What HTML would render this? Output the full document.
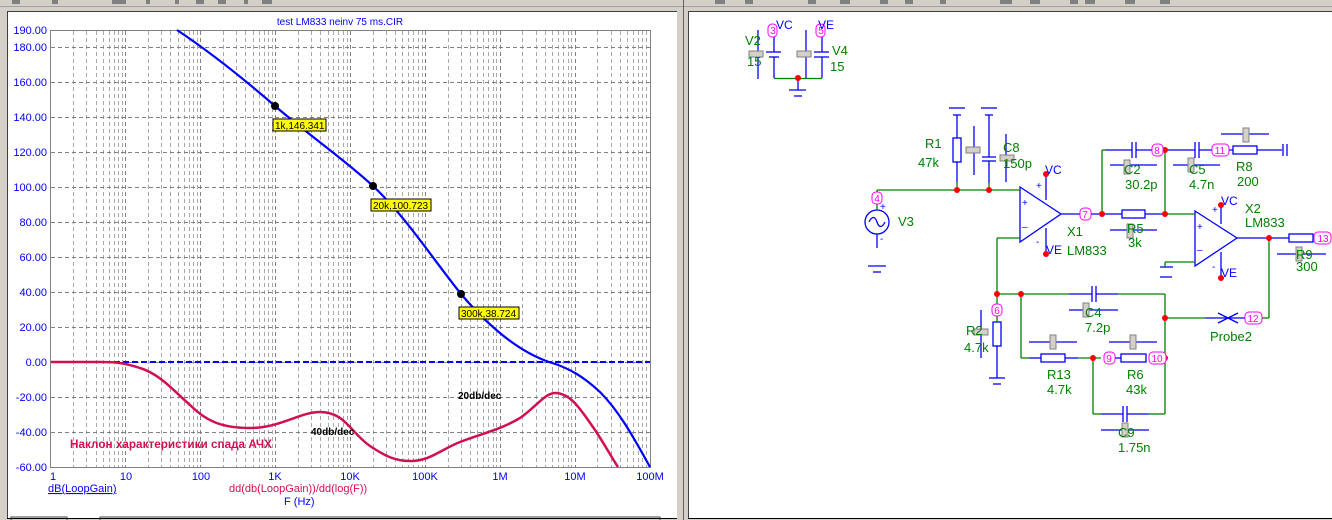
<!DOCTYPE html>
<html><head><meta charset="utf-8"><style>
html,body{margin:0;padding:0;width:1332px;height:520px;overflow:hidden;background:#d4d0c8;}
svg{display:block;font-family:"Liberation Sans",sans-serif;}
</style></head><body>
<svg id="s" width="1332" height="520" viewBox="0 0 1332 520" xmlns="http://www.w3.org/2000/svg">
<rect x="0" y="0" width="1332" height="520" fill="#d4d0c8"/>
<line x1="0" y1="6.5" x2="1332" y2="6.5" stroke="#a0a0a0"/>
<g fill="#808080">
<rect x="12" y="0" width="8" height="4"/><rect x="52" y="0" width="6" height="4"/><rect x="112" y="0" width="14" height="4"/><rect x="146" y="0" width="4" height="4"/><rect x="175" y="0" width="4" height="4"/><rect x="196" y="0" width="8" height="4"/><rect x="218" y="0" width="8" height="4"/><rect x="244" y="0" width="4" height="4"/><rect x="262" y="0" width="10" height="4"/>
<rect x="715" y="0" width="10" height="4"/><rect x="745" y="0" width="8" height="4"/><rect x="808" y="0" width="8" height="4"/><rect x="840" y="0" width="10" height="4"/><rect x="880" y="0" width="8" height="4"/><rect x="905" y="0" width="8" height="4"/><rect x="940" y="0" width="6" height="4"/><rect x="1000" y="0" width="12" height="4"/><rect x="1030" y="0" width="10" height="4"/><rect x="1070" y="0" width="8" height="4"/><rect x="1085" y="0" width="10" height="4"/><rect x="1125" y="0" width="10" height="4"/><rect x="1160" y="0" width="10" height="4"/>
</g>
<!-- left window -->
<rect x="7" y="11" width="670" height="508" fill="#fff"/>
<line x1="7.5" y1="11" x2="7.5" y2="519" stroke="#404040"/>
<line x1="7" y1="11.5" x2="677" y2="11.5" stroke="#404040"/>
<line x1="7" y1="518.5" x2="677" y2="518.5" stroke="#000"/>
<line x1="683.5" y1="0" x2="683.5" y2="520" stroke="#606060"/>
<!-- right window -->
<rect x="688" y="11" width="644" height="508" fill="#fff"/>
<line x1="688.5" y1="11" x2="688.5" y2="519" stroke="#404040"/>
<line x1="688" y1="11.5" x2="1332" y2="11.5" stroke="#404040"/>
<line x1="688" y1="518.5" x2="1332" y2="518.5" stroke="#000"/>

<g id="grid"></g>
<line x1="50.5" y1="30" x2="50.5" y2="467" stroke="#808080"/>
<line x1="50" y1="467.5" x2="651" y2="467.5" stroke="#808080"/>
<line x1="650.5" y1="30" x2="650.5" y2="467" stroke="#808080"/>
<line x1="50" y1="30.5" x2="651" y2="30.5" stroke="#808080"/>

<text x="340" y="25" font-size="10" fill="#0000ff" text-anchor="middle">test LM833 neinv 75 ms.CIR</text>
<g font-size="11" fill="#0000ff" text-anchor="end">
<text x="47" y="34">190.00</text><text x="47" y="51">180.00</text><text x="47" y="86">160.00</text><text x="47" y="121">140.00</text><text x="47" y="156">120.00</text><text x="47" y="191">100.00</text><text x="47" y="226">80.00</text><text x="47" y="261">60.00</text><text x="47" y="296">40.00</text><text x="47" y="331">20.00</text><text x="47" y="366">0.00</text><text x="47" y="401">-20.00</text><text x="47" y="436">-40.00</text><text x="47" y="471">-60.00</text>
</g>
<g font-size="11" fill="#0000ff" text-anchor="middle">
<text x="53" y="480">1</text><text x="126" y="480">10</text><text x="201" y="480">100</text><text x="275" y="480">1K</text><text x="350" y="480">10K</text><text x="425" y="480">100K</text><text x="500" y="480">1M</text><text x="575" y="480">10M</text><text x="650" y="480">100M</text>
</g>
<text x="48" y="492" font-size="11" fill="#0000ff" text-decoration="underline">dB(LoopGain)</text>
<text x="229" y="492" font-size="11" fill="#d01050">dd(db(LoopGain))/dd(log(F))</text>
<text x="284" y="505" font-size="11" fill="#0000ff">F (Hz)</text>

<line x1="51" y1="362" x2="650" y2="362" stroke="#0000ff" stroke-width="2" stroke-dasharray="6,3"/>
<path d="M51,362 L100,362 C112,362 122,362 140,368 C160,374 175,392 190,405 C205,420 220,428 250,428 C280,428 300,412 320,412 C345,412 350,432 370,446 C385,456 395,461 410,461 C430,461 440,450 460,442 C480,434 500,430 520,418 C535,408 545,393 555,393 C570,393 580,408 595,430 C605,445 612,458 618,467" fill="none" stroke="#d01050" stroke-width="2.5"/>
<path d="M177,30 C210,52 245,80 275,106 C310,136 345,160 373,186 C405,216 430,255 461,294 C490,328 520,352 549,362 C570,368 585,378 600,392 C620,412 635,440 650,467" fill="none" stroke="#0000ff" stroke-width="2.2"/>
<circle cx="275" cy="106" r="4" fill="#000"/><circle cx="373" cy="186" r="4" fill="#000"/><circle cx="461" cy="294" r="4" fill="#000"/>
<g font-size="10" fill="#000">
<rect x="273" y="119" width="53" height="12" fill="#ffff00" stroke="#000"/><text x="275" y="129">1k,146.341</text>
<rect x="371" y="199" width="60" height="12" fill="#ffff00" stroke="#000"/><text x="373" y="209">20k,100.723</text>
<rect x="459" y="307" width="60" height="12" fill="#ffff00" stroke="#000"/><text x="461" y="317">300k,38.724</text>
<text x="458" y="399" font-weight="bold">20db/dec</text>
<text x="311" y="435" font-weight="bold">40db/dec</text>
</g>
<text x="70" y="448" font-size="12" font-weight="bold" fill="#d01050" textLength="202" lengthAdjust="spacingAndGlyphs">Наклон характеристики спада АЧХ</text>
<!-- status bar boxes -->
<g fill="none" stroke="#404040"><rect x="11" y="517" width="56" height="4"/><rect x="100" y="517" width="560" height="4"/></g>

<!-- schematic -->
<g fill="none" stroke-width="1.3">
<!-- top supply -->
<g stroke="#0000ff">
<line x1="758" y1="30" x2="758" y2="79"/><line x1="774" y1="37" x2="774" y2="52"/><line x1="766" y1="52" x2="781" y2="52"/><line x1="769" y1="57" x2="779" y2="57"/><line x1="774" y1="57" x2="774" y2="78"/>
<line x1="806" y1="30" x2="806" y2="78"/><line x1="822" y1="37" x2="822" y2="52"/><line x1="814" y1="52" x2="829" y2="52"/><line x1="814" y1="57" x2="829" y2="57"/><line x1="822" y1="57" x2="822" y2="78"/>
<line x1="798" y1="78" x2="798" y2="90"/><line x1="789" y1="90" x2="806" y2="90"/><line x1="794" y1="96" x2="802" y2="96"/>
</g>
<line x1="774" y1="78.5" x2="822" y2="78.5" stroke="#008000"/>
<!-- R1, C8 -->
<g stroke="#0000ff">
<line x1="949" y1="108" x2="965" y2="108"/><line x1="953" y1="115" x2="961" y2="115"/><line x1="957" y1="115" x2="957" y2="138"/><rect x="953" y="138" width="8" height="24"/><line x1="957" y1="162" x2="957" y2="182"/>
<line x1="981" y1="108" x2="997" y2="108"/><line x1="985" y1="115" x2="993" y2="115"/><line x1="989" y1="115" x2="989" y2="157"/><line x1="982" y1="157" x2="996" y2="157"/><line x1="982" y1="161" x2="996" y2="161"/><line x1="989" y1="161" x2="989" y2="183"/>
<line x1="974" y1="126" x2="974" y2="175"/><line x1="1006" y1="134" x2="1006" y2="182"/>
<!-- V3 -->
<circle cx="877" cy="222" r="12"/><path d="M869,222 C872,216 875,216 877,222 C879,228 882,228 885,222"/>
<line x1="877" y1="234" x2="877" y2="248"/><line x1="868" y1="266" x2="886" y2="266"/><line x1="873" y1="272" x2="881" y2="272"/>
<!-- X1 -->
<path d="M1020,187 L1061,214 L1020,242 Z"/><line x1="1046" y1="174" x2="1046" y2="200"/><line x1="1046" y1="228" x2="1046" y2="254"/>
<line x1="1061" y1="214" x2="1102" y2="214"/>
<line x1="1102" y1="214" x2="1122" y2="214"/><rect x="1122" y="210" width="23" height="8"/><line x1="1145" y1="214" x2="1165" y2="214"/>
<line x1="1110" y1="230" x2="1157" y2="230"/>
<line x1="1105" y1="150" x2="1132" y2="150"/><line x1="1132" y1="142" x2="1132" y2="158"/><line x1="1136" y1="142" x2="1136" y2="158"/><line x1="1136" y1="150" x2="1165" y2="150"/>
<line x1="1110" y1="165" x2="1157" y2="165"/>
<line x1="1165" y1="150" x2="1195" y2="150"/><line x1="1195" y1="142" x2="1195" y2="158"/><line x1="1199" y1="142" x2="1199" y2="158"/><line x1="1199" y1="150" x2="1233" y2="150"/>
<line x1="1173" y1="165" x2="1220" y2="165"/>
<rect x="1233" y="146" width="24" height="8"/><line x1="1257" y1="150" x2="1282" y2="150"/><line x1="1283" y1="144" x2="1283" y2="156"/><line x1="1287" y1="144" x2="1287" y2="156"/>
<line x1="1221" y1="134" x2="1269" y2="134"/>
<!-- X2 -->
<path d="M1195,211 L1237,238 L1195,266 Z"/><line x1="1221" y1="205" x2="1221" y2="224"/><line x1="1221" y1="252" x2="1221" y2="278"/>
<line x1="1237" y1="238" x2="1289" y2="238"/><rect x="1289" y="234" width="24" height="8"/>
<line x1="1277" y1="254" x2="1326" y2="254"/>
<line x1="1160" y1="267" x2="1173" y2="267"/><line x1="1160" y1="277" x2="1172" y2="277"/>
<!-- lower network -->
<line x1="1069" y1="294" x2="1092" y2="294"/><line x1="1092" y1="286" x2="1092" y2="302"/><line x1="1096" y1="286" x2="1096" y2="302"/><line x1="1096" y1="294" x2="1118" y2="294"/>
<line x1="1069" y1="310" x2="1118" y2="310"/>
<line x1="1205" y1="318" x2="1253" y2="318"/><path d="M1218,313 L1238,323 M1218,323 L1238,313"/>
<rect x="997" y="322" width="0" height="0"/><rect x="993" y="322" width="8" height="24"/><line x1="997" y1="346" x2="997" y2="378"/>
<line x1="989" y1="378" x2="1005" y2="378"/><line x1="993" y1="384" x2="1001" y2="384"/><line x1="981" y1="310" x2="981" y2="358"/>
<line x1="1029" y1="358" x2="1041" y2="358"/><rect x="1041" y="354" width="24" height="8"/><line x1="1065" y1="358" x2="1078" y2="358"/>
<line x1="1029" y1="342" x2="1077" y2="342"/><line x1="1109" y1="342" x2="1157" y2="342"/>
<line x1="1109" y1="358" x2="1121" y2="358"/><rect x="1121" y="354" width="25" height="8"/>
<line x1="1101" y1="414" x2="1123" y2="414"/><line x1="1123" y1="406" x2="1123" y2="422"/><line x1="1127" y1="406" x2="1127" y2="422"/><line x1="1127" y1="414" x2="1149" y2="414"/>
<line x1="1101" y1="430" x2="1149" y2="430"/>
</g>
<g stroke="#008000">
<line x1="877" y1="190" x2="1020" y2="190"/><line x1="877" y1="190" x2="877" y2="210"/>
<line x1="957" y1="182" x2="957" y2="190"/><line x1="989" y1="183" x2="989" y2="190"/>
<line x1="1020" y1="238" x2="997" y2="238"/><line x1="997" y1="238" x2="997" y2="322"/>
<line x1="1102" y1="214" x2="1102" y2="150"/><line x1="1102" y1="150" x2="1106" y2="150"/>
<line x1="1165" y1="150" x2="1165" y2="214"/><line x1="1165" y1="214" x2="1195" y2="214"/>
<line x1="1195" y1="262" x2="1165" y2="262"/><line x1="1165" y1="262" x2="1165" y2="267"/>
<line x1="1269" y1="238" x2="1269" y2="318"/><line x1="1262" y1="318" x2="1269" y2="318"/>
<line x1="997" y1="294" x2="1069" y2="294"/><line x1="1118" y1="294" x2="1165" y2="294"/><line x1="1165" y1="294" x2="1165" y2="414"/><line x1="1165" y1="318" x2="1205" y2="318"/>
<line x1="1021" y1="294" x2="1021" y2="358"/><line x1="1021" y1="358" x2="1029" y2="358"/><line x1="1078" y1="358" x2="1101" y2="358"/>
<line x1="1093" y1="358" x2="1093" y2="414"/><line x1="1093" y1="414" x2="1101" y2="414"/><line x1="1149" y1="414" x2="1165" y2="414"/>
</g>
</g>
<!-- knobs -->
<g fill="#d4d0c8" stroke="#808080">
<rect x="749" y="51" width="14" height="6"/><rect x="797" y="51" width="14" height="6"/>
<rect x="966" y="147" width="14" height="6"/><rect x="1000" y="155" width="14" height="6"/>
<rect x="1124" y="160" width="6" height="14"/><rect x="1188" y="158" width="6" height="14"/><rect x="1243" y="128" width="6" height="14"/>
<rect x="1127" y="224" width="6" height="14"/><rect x="1296" y="247" width="6" height="14"/>
<rect x="974" y="329" width="14" height="6"/><rect x="1083" y="303" width="6" height="14"/><rect x="1050" y="335" width="6" height="14"/><rect x="1130" y="335" width="6" height="14"/><rect x="1122" y="423" width="6" height="14"/>
</g>
<!-- red dots -->
<g fill="#ff0000">
<circle cx="798" cy="78" r="3"/><circle cx="957" cy="190" r="3"/><circle cx="989" cy="190" r="3"/><circle cx="1046" cy="174" r="3"/><circle cx="1046" cy="254" r="3"/>
<circle cx="1102" cy="214" r="3"/><circle cx="1165" cy="214" r="3"/><circle cx="1165" cy="150" r="3"/><circle cx="1221" cy="205" r="3"/><circle cx="1221" cy="278" r="3"/><circle cx="1269" cy="238" r="3"/>
<circle cx="997" cy="294" r="3"/><circle cx="1021" cy="294" r="3"/><circle cx="1165" cy="318" r="3"/><circle cx="1093" cy="358" r="3"/><circle cx="1165" cy="358" r="3"/>
</g>
<!-- node labels -->
<g font-size="10" fill="#ff00ff" text-anchor="middle">
<rect x="768" y="24" width="9" height="13" rx="4" fill="#fff" stroke="#ff00ff"/><text x="773" y="34">3</text>
<rect x="816" y="24" width="9" height="13" rx="4" fill="#fff" stroke="#ff00ff"/><text x="821" y="34">5</text>
<rect x="872" y="192" width="10" height="12" rx="4" fill="#fff" stroke="#ff00ff"/><text x="877" y="202">4</text>
<rect x="1080" y="208" width="11" height="12" rx="4" fill="#fff" stroke="#ff00ff"/><text x="1085" y="218">7</text>
<rect x="1152" y="144" width="11" height="12" rx="4" fill="#fff" stroke="#ff00ff"/><text x="1157" y="154">8</text>
<rect x="1212" y="144" width="17" height="12" rx="4" fill="#fff" stroke="#ff00ff"/><text x="1220" y="154">11</text>
<rect x="1314" y="232" width="17" height="12" rx="4" fill="#fff" stroke="#ff00ff"/><text x="1323" y="242">13</text>
<rect x="1245" y="312" width="17" height="12" rx="4" fill="#fff" stroke="#ff00ff"/><text x="1253" y="322">12</text>
<rect x="992" y="304" width="10" height="12" rx="4" fill="#fff" stroke="#ff00ff"/><text x="997" y="314">6</text>
<rect x="1104" y="352" width="11" height="12" rx="4" fill="#fff" stroke="#ff00ff"/><text x="1109" y="362">9</text>
<rect x="1149" y="352" width="17" height="12" rx="4" fill="#fff" stroke="#ff00ff"/><text x="1157" y="362">10</text>
</g>
<g font-size="12" fill="#0000ff">
<text x="776" y="29">VC</text><text x="818" y="29">VE</text>
<text x="1045" y="174">VC</text><text x="1046" y="254">VE</text><text x="1221" y="205">VC</text><text x="1221" y="277">VE</text>
<text x="1036" y="189" font-size="10">+</text><text x="1036" y="245" font-size="10">-</text><text x="1212" y="213" font-size="10">+</text><text x="1212" y="270" font-size="10">-</text>
<text x="1022" y="206" font-size="10">+</text><text x="1022" y="230" font-size="10">–</text><text x="1197" y="230" font-size="10">+</text><text x="1197" y="253" font-size="10">–</text>
<text x="880" y="210" font-size="10">+</text><text x="880" y="242" font-size="10">-</text>
</g>
<g font-size="13" fill="#008000">
<text x="745" y="45">V2</text><text x="747" y="66">15</text><text x="832" y="55">V4</text><text x="830" y="71">15</text>
<text x="925" y="148">R1</text><text x="918" y="167">47k</text><text x="1003" y="152">C8</text><text x="1003" y="168">150p</text>
<text x="898" y="226">V3</text><text x="1067" y="236">X1</text><text x="1067" y="255">LM833</text>
<text x="1124" y="174">C2</text><text x="1125" y="189">30.2p</text><text x="1189" y="174">C5</text><text x="1189" y="189">4.7n</text><text x="1236" y="171">R8</text><text x="1237" y="186">200</text>
<text x="1127" y="233">R5</text><text x="1128" y="247">3k</text><text x="1245" y="213">X2</text><text x="1245" y="227">LM833</text>
<text x="1296" y="259">R9</text><text x="1296" y="271">300</text>
<text x="1085" y="317">C4</text><text x="1085" y="332">7.2p</text><text x="1210" y="341">Probe2</text>
<text x="966" y="335">R2</text><text x="964" y="352">4.7k</text>
<text x="1047" y="379">R13</text><text x="1047" y="394">4.7k</text><text x="1127" y="379">R6</text><text x="1126" y="394">43k</text>
<text x="1118" y="437">C9</text><text x="1118" y="452">1.75n</text>
</g>
</svg>
<script>
(function(){
var g=document.getElementById('grid'),ns='http://www.w3.org/2000/svg',h='';
function px(f){return 50.5+74.9*Math.log10(f);}
for(var d=0;d<8;d++){for(var k=1;k<10;k++){var f=Math.pow(10,d)*k;if(d==0&&k==1)continue;var x=Math.round(px(f))+0.5;
h+='<line x1="'+x+'" y1="31" x2="'+x+'" y2="467" stroke="'+(k==1?'#808080':'#a8a8a8')+'" stroke-dasharray="4,3"/>';}}
var ys=[180,160,140,120,100,80,60,40,20,0,-20,-40];
ys.forEach(function(v){var y=Math.round(362-v*1.75)+0.5;h+='<line x1="51" y1="'+y+'" x2="650" y2="'+y+'" stroke="#808080" stroke-dasharray="4,3"/>';});
g.innerHTML=h;
})();
</script>
</body></html>
